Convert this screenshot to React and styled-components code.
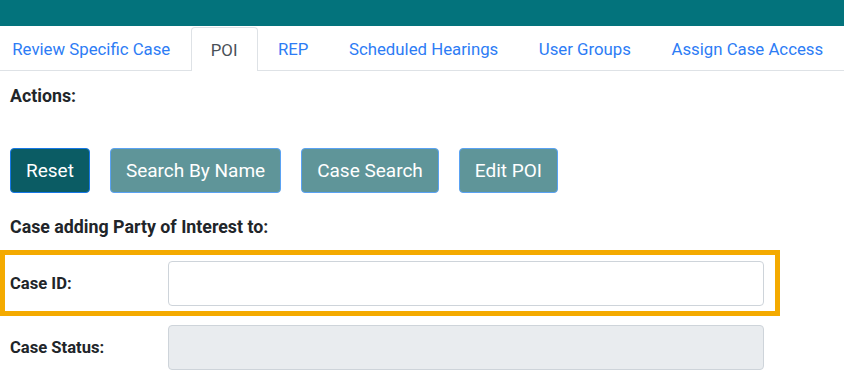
import React from "react";
import styled, { createGlobalStyle } from "styled-components";

const GlobalStyle = createGlobalStyle`
  body {
    margin: 0;
    background: #fff;
    font-family: Roboto, "Liberation Sans", sans-serif;
    color: #212529;
    overflow: hidden;
  }
`;

const tabs = [
  "Review Specific Case",
  "POI",
  "REP",
  "Scheduled Hearings",
  "User Groups",
  "Assign Case Access",
];

const buttons = [
  { label: "Reset", primary: true },
  { label: "Search By Name" },
  { label: "Case Search" },
  { label: "Edit POI" },
];

function App() {
  return (
    <Page>
      <GlobalStyle />
      <TopBar />
      <Tabs>
        {tabs.map((t) => (
          <Tab key={t} active={t === "POI"}>
            {t}
          </Tab>
        ))}
      </Tabs>
      <Section>
        <Label>Actions:</Label>
        <ButtonRow>
          {buttons.map((b) => (
            <Button key={b.label} primary={b.primary}>
              {b.label}
            </Button>
          ))}
        </ButtonRow>
        <Label>Case adding Party of Interest to:</Label>
      </Section>
      <FormRow highlighted>
        <RowLabel>Case ID:</RowLabel>
        <Input type="text" />
      </FormRow>
      <FormRow>
        <RowLabel>Case Status:</RowLabel>
        <Input type="text" disabled />
      </FormRow>
    </Page>
  );
}

const Page = styled.div`
  width: 844px;
  height: 387px;
`;

const TopBar = styled.div`
  height: 26px;
  background: #03737c;
`;

const Tabs = styled.nav`
  display: flex;
  align-items: flex-end;
  height: 44px;
  border-bottom: 1px solid #dee2e6;
  margin-left: -8px;
`;

const Tab = styled.div`
  box-sizing: border-box;
  display: flex;
  align-items: center;
  padding: 0 19.25px;
  font-size: 16.8px;
  color: ${(p) => (p.active ? "#495057" : "#2d7cf5")};
  background: #fff;
  border: 1px solid ${(p) => (p.active ? "#dee2e6" : "transparent")};
  border-bottom: none;
  border-radius: 4px 4px 0 0;
  margin-bottom: ${(p) => (p.active ? "-1px" : "0")};
  height: ${(p) => (p.active ? "44px" : "43px")};
  white-space: nowrap;
`;

const Section = styled.div`
  padding: 13px 10px 0;
`;

const Label = styled.div`
  font-size: 17.8px;
  font-weight: 700;
  line-height: 24px;
`;

const ButtonRow = styled.div`
  display: flex;
  gap: 20px;
  margin: 40px 0 22px;
`;

const Button = styled.button`
  height: 45px;
  padding: 0 15px;
  font-family: Roboto, "Liberation Sans", sans-serif;
  font-size: 19px;
  color: #fff;
  background: ${(p) => (p.primary ? "#0b5c64" : "#5f9599")};
  border: 1px solid ${(p) => (p.primary ? "#1677e6" : "#5aa2f3")};
  border-radius: 4px;
`;

const FormRow = styled.div`
  display: flex;
  align-items: center;
  width: 780px;
  box-sizing: border-box;
  margin-top: ${(p) => (p.highlighted ? "11px" : "0")};
  padding: ${(p) => (p.highlighted ? "6px 11px 5px 5px" : "9px 16px 0 10px")};
  border: ${(p) => (p.highlighted ? "5px solid #f4aa00" : "none")};
`;

const RowLabel = styled.div`
  width: 158px;
  font-size: 16.6px;
  font-weight: 700;
`;

const Input = styled.input`
  flex: 1;
  height: 45px;
  box-sizing: border-box;
  border: 1px solid #ced4da;
  border-radius: 4px;
  background: ${(p) => (p.disabled ? "#e9ecef" : "#fff")};
  font-size: 16px;
  padding: 0 12px;
`;

export default App;
